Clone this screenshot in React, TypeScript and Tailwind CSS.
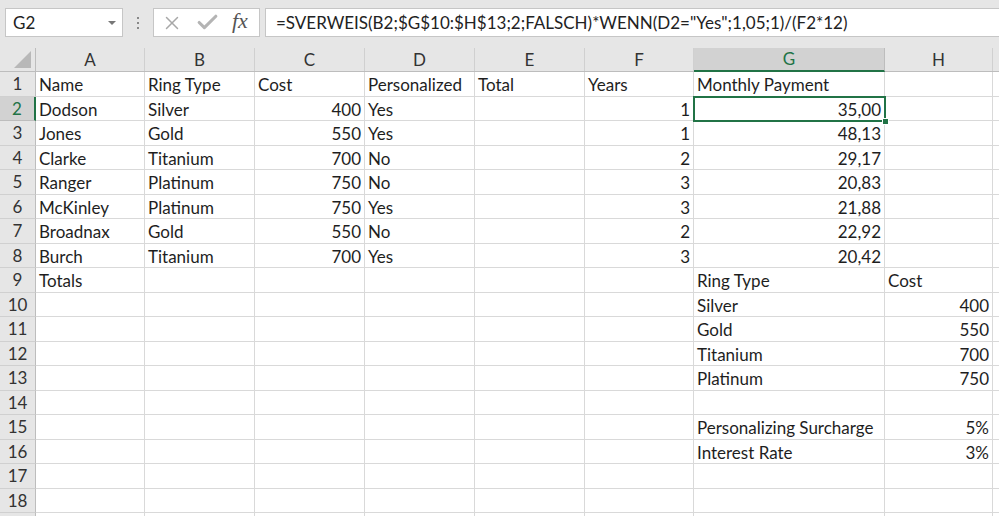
import { X, Check } from 'lucide-react';

type Cell = { v: string; right?: boolean };

const columns = [
  { key: 'A', w: 109 },
  { key: 'B', w: 110 },
  { key: 'C', w: 110 },
  { key: 'D', w: 110 },
  { key: 'E', w: 110 },
  { key: 'F', w: 109 },
  { key: 'G', w: 191 },
  { key: 'H', w: 108 },
  { key: '', w: 60 },
];

const L = (v: string): Cell => ({ v });
const R = (v: string): Cell => ({ v, right: true });

// row number -> column -> cell
const data: Record<number, Record<string, Cell>> = {
  1: { A: L('Name'), B: L('Ring Type'), C: L('Cost'), D: L('Personalized'), E: L('Total'), F: L('Years'), G: L('Monthly Payment') },
  2: { A: L('Dodson'), B: L('Silver'), C: R('400'), D: L('Yes'), F: R('1'), G: R('35,00') },
  3: { A: L('Jones'), B: L('Gold'), C: R('550'), D: L('Yes'), F: R('1'), G: R('48,13') },
  4: { A: L('Clarke'), B: L('Titanium'), C: R('700'), D: L('No'), F: R('2'), G: R('29,17') },
  5: { A: L('Ranger'), B: L('Platinum'), C: R('750'), D: L('No'), F: R('3'), G: R('20,83') },
  6: { A: L('McKinley'), B: L('Platinum'), C: R('750'), D: L('Yes'), F: R('3'), G: R('21,88') },
  7: { A: L('Broadnax'), B: L('Gold'), C: R('550'), D: L('No'), F: R('2'), G: R('22,92') },
  8: { A: L('Burch'), B: L('Titanium'), C: R('700'), D: L('Yes'), F: R('3'), G: R('20,42') },
  9: { A: L('Totals'), G: L('Ring Type'), H: L('Cost') },
  10: { G: L('Silver'), H: R('400') },
  11: { G: L('Gold'), H: R('550') },
  12: { G: L('Titanium'), H: R('700') },
  13: { G: L('Platinum'), H: R('750') },
  15: { G: L('Personalizing Surcharge'), H: R('5%') },
  16: { G: L('Interest Rate'), H: R('3%') },
};

const rows = Array.from({ length: 19 }, (_, i) => i + 1);

function FormulaBar() {
  return (
    <div className="h-[48px] bg-[#e6e6e6] flex items-start pt-[8px] pl-[5px]">
      {/* Name box */}
      <div className="w-[118px] h-[29px] bg-white border border-[#c6c6c6] flex items-center justify-between pl-[7px] pr-[6px]">
        <span className="text-[17px] text-[#222]">G2</span>
        <span className="w-0 h-0 border-l-[4px] border-r-[4px] border-t-[4px] border-l-transparent border-r-transparent border-t-[#777]" />
      </div>
      {/* Grip dots */}
      <div className="w-[30px] h-[29px] flex flex-col items-center justify-center gap-[3px]">
        <span className="w-[2px] h-[2px] bg-[#888]" />
        <span className="w-[2px] h-[2px] bg-[#888]" />
        <span className="w-[2px] h-[2px] bg-[#888]" />
      </div>
      {/* Cancel / enter / fx */}
      <div className="w-[107px] h-[29px] bg-white border border-[#c6c6c6] flex items-center pl-[7px] gap-[12px]">
        <X className="w-[22px] h-[22px] text-[#a8a8a8]" strokeWidth={1.6} />
        <Check className="w-[25px] h-[25px] text-[#b4b4b4]" strokeWidth={3} />
        <span className="font-['Liberation_Serif',serif] italic text-[22px] text-[#555] leading-none pb-[3px]">fx</span>
      </div>
      {/* Formula input */}
      <div className="flex-1 ml-[5px] h-[29px] bg-white border border-[#c6c6c6] border-r-0 flex items-center pl-[10px]">
        <span className="text-[17px] text-[#222] whitespace-nowrap">
          =SVERWEIS(B2;$G$10:$H$13;2;FALSCH)*WENN(D2="Yes";1,05;1)/(F2*12)
        </span>
      </div>
    </div>
  );
}

function HeaderRow() {
  return (
    <div className="flex h-[24px] bg-[#e6e6e6] border-b border-[#bdbdbd]">
      <div className="w-[36px] shrink-0 border-r border-[#bdbdbd] relative">
        <svg className="absolute right-[4px] bottom-[3px]" width="17" height="17" viewBox="0 0 17 17">
          <polygon points="17,0 17,17 0,17" fill="#b8b8b8" />
        </svg>
      </div>
      {columns.map((c, i) => {
        const sel = c.key === 'G';
        return (
          <div
            key={i}
            style={{ width: c.w }}
            className={
              sel
                ? 'shrink-0 flex items-center justify-center bg-[#d2d2d2] text-[#217346] border-r border-[#bdbdbd] border-b-2 border-b-[#217346] -mb-px text-[17px]'
                : 'shrink-0 flex items-center justify-center text-[#333] border-r border-[#d0d0d0] text-[17px]'
            }
          >
            {c.key}
          </div>
        );
      })}
    </div>
  );
}

function GridRow({ n }: { n: number }) {
  const sel = n === 2;
  const r = data[n] || {};
  return (
    <div className="flex h-[24.5px]">
      <div
        className={
          sel
            ? 'w-[36px] shrink-0 bg-[#d2d2d2] text-[#217346] border-r-2 border-r-[#217346] border-b border-b-[#bdbdbd] flex items-center justify-center text-[17px]'
            : 'w-[36px] shrink-0 bg-[#e6e6e6] text-[#333] border-r border-[#bdbdbd] border-b border-b-[#d0d0d0] flex items-center justify-center text-[17px]'
        }
      >
        {n <= 18 ? n : ''}
      </div>
      {columns.map((c, i) => {
        const cell = c.key ? r[c.key] : undefined;
        return (
          <div
            key={i}
            style={{ width: c.w }}
            className={
              'shrink-0 border-r border-b border-[#d9d9d9] flex items-center px-[3px] pt-[2px] whitespace-nowrap overflow-visible text-[17px] text-[#1e1e1e] ' +
              (cell && cell.right ? 'justify-end' : 'justify-start')
            }
          >
            {cell ? cell.v : ''}
          </div>
        );
      })}
    </div>
  );
}

export default function App() {
  return (
    <div className="w-[999px] h-[516px] overflow-hidden bg-white font-[Lato,sans-serif]">
      <FormulaBar />
      <HeaderRow />
      <div className="relative">
        {rows.map((n) => (
          <GridRow key={n} n={n} />
        ))}
        {/* active cell G2 */}
        <div className="absolute left-[693px] top-[23.5px] w-[193px] h-[26.5px] border-2 border-[#217346] pointer-events-none">
          <span className="absolute -right-[5px] -bottom-[5px] w-[7px] h-[7px] bg-[#217346] border border-white" />
        </div>
      </div>
    </div>
  );
}
